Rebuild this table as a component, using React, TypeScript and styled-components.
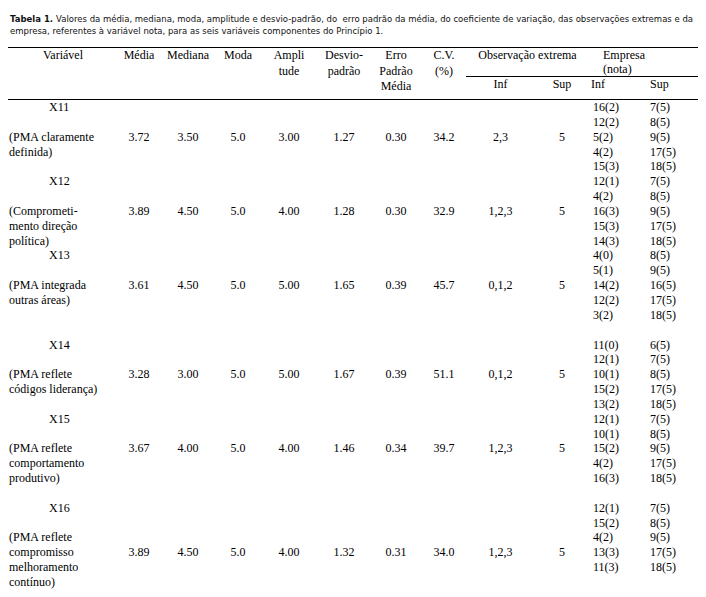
import React from "react";
import styled, { createGlobalStyle } from "styled-components";

const COLS = "110px 42px 56px 44px 58px 52px 52px 44px 69px 54px 56px 53px";
const LINE = 14.85;

type Group = {
  name: string;
  label: string[];
  valueRow: number;
  values: string[];
  inf: string[];
  sup: string[];
  rows: number;
};

const SUP = ["7(5)", "8(5)", "9(5)", "17(5)", "18(5)"];

const groups: Group[] = [
  {
    name: "X11",
    label: ["(PMA claramente", "definida)"],
    valueRow: 3,
    values: ["3.72", "3.50", "5.0", "3.00", "1.27", "0.30", "34.2", "2,3", "5"],
    inf: ["16(2)", "12(2)", "5(2)", "4(2)", "15(3)"],
    sup: SUP,
    rows: 5,
  },
  {
    name: "X12",
    label: ["(Comprometi-", "mento direção", "política)"],
    valueRow: 3,
    values: ["3.89", "4.50", "5.0", "4.00", "1.28", "0.30", "32.9", "1,2,3", "5"],
    inf: ["12(1)", "4(2)", "16(3)", "15(3)", "14(3)"],
    sup: SUP,
    rows: 5,
  },
  {
    name: "X13",
    label: ["(PMA integrada", "outras áreas)"],
    valueRow: 3,
    values: ["3.61", "4.50", "5.0", "5.00", "1.65", "0.39", "45.7", "0,1,2", "5"],
    inf: ["4(0)", "5(1)", "14(2)", "12(2)", "3(2)"],
    sup: ["8(5)", "9(5)", "16(5)", "17(5)", "18(5)"],
    rows: 6,
  },
  {
    name: "X14",
    label: ["(PMA reflete", "códigos liderança)"],
    valueRow: 3,
    values: ["3.28", "3.00", "5.0", "5.00", "1.67", "0.39", "51.1", "0,1,2", "5"],
    inf: ["11(0)", "12(1)", "10(1)", "15(2)", "13(2)"],
    sup: ["6(5)", "7(5)", "8(5)", "17(5)", "18(5)"],
    rows: 5,
  },
  {
    name: "X15",
    label: ["(PMA reflete", "comportamento", "produtivo)"],
    valueRow: 3,
    values: ["3.67", "4.00", "5.0", "4.00", "1.46", "0.34", "39.7", "1,2,3", "5"],
    inf: ["12(1)", "10(1)", "15(2)", "4(2)", "16(3)"],
    sup: SUP,
    rows: 6,
  },
  {
    name: "X16",
    label: ["(PMA reflete", "compromisso", "melhoramento", "contínuo)"],
    valueRow: 4,
    values: ["3.89", "4.50", "5.0", "4.00", "1.32", "0.31", "34.0", "1,2,3", "5"],
    inf: ["12(1)", "15(2)", "4(2)", "13(3)", "11(3)"],
    sup: SUP,
    rows: 6,
  },
];

const GlobalStyle = createGlobalStyle`
  body {
    margin: 0;
    background: #fff;
  }
`;

const Page = styled.div`
  width: 706px;
  height: 597px;
  overflow: hidden;
  box-sizing: border-box;
  padding: 13px 8px 0 8px;
  color: #000;
`;

const Caption = styled.div`
  margin: 0 0 10px 2px;
  font-family: "DejaVu Sans", Verdana, sans-serif;
  font-size: 8.5px;
  line-height: 12px;
  color: #111;
`;

const CaptionLine = styled.div`
  white-space: pre;
`;

const CaptionTitle = styled.b`
  margin-right: 3px;
  font-weight: bold;
`;

const Table = styled.div`
  width: 690px;
  border-top: 1px solid #000;
  font-family: "Liberation Serif", "Times New Roman", serif;
  font-size: 12px;
`;

const Head = styled.div`
  display: grid;
  grid-template-columns: ${COLS};
  grid-template-rows: 15px 14px 22px;
  border-bottom: 1px solid #000;
`;

const HeadCell = styled.div<{ $col: string; $row: string; $align?: string; $pad?: number; $rule?: boolean }>`
  grid-column: ${(p) => p.$col};
  grid-row: ${(p) => p.$row};
  text-align: ${(p) => p.$align ?? "center"};
  padding-left: ${(p) => p.$pad ?? 0}px;
  line-height: ${(p) => (p.$rule ? "14.3px" : "15.5px")};
  border-bottom: ${(p) => (p.$rule ? "1px solid #000" : "none")};
`;

const Body = styled.div`
  display: flex;
  flex-direction: column;
`;

const GroupGrid = styled.div<{ $rows: number }>`
  display: grid;
  grid-template-columns: ${COLS};
  grid-template-rows: repeat(${(p) => p.$rows}, ${LINE}px);
  line-height: ${LINE}px;
`;

const VarName = styled.div`
  grid-column: 1;
  grid-row: 1;
  padding-left: 41px;
`;

const LabelLine = styled.div<{ $row: number }>`
  grid-column: 1;
  grid-row: ${(p) => p.$row};
  padding-left: 1px;
  white-space: nowrap;
`;

const Value = styled.div<{ $row: number; $col: number }>`
  grid-column: ${(p) => p.$col};
  grid-row: ${(p) => p.$row};
  text-align: center;
`;

const Nota = styled.div<{ $row: number; $col: number; $pad: number }>`
  grid-column: ${(p) => p.$col};
  grid-row: ${(p) => p.$row};
  padding-left: ${(p) => p.$pad}px;
`;

const GroupRows = ({ g }: { g: Group }) => (
  <GroupGrid $rows={g.rows}>
    <VarName>{g.name}</VarName>
    {g.label.map((l, i) => (
      <LabelLine key={l} $row={3 + i}>
        {l}
      </LabelLine>
    ))}
    {g.values.map((v, i) => (
      <Value key={i} $row={g.valueRow} $col={2 + i}>
        {v}
      </Value>
    ))}
    {g.inf.map((v, i) => (
      <Nota key={"i" + i} $row={1 + i} $col={11} $pad={4}>
        {v}
      </Nota>
    ))}
    {g.sup.map((v, i) => (
      <Nota key={"s" + i} $row={1 + i} $col={12} $pad={5}>
        {v}
      </Nota>
    ))}
  </GroupGrid>
);

const App = () => {
  return (
    <Page>
      <GlobalStyle />
      <Caption>
        <CaptionLine>
          <CaptionTitle>Tabela 1.</CaptionTitle>
          {
            "Valores da média, mediana, moda, amplitude e desvio-padrão, do  erro padrão da média, do coeficiente de variação, das observações extremas e da"
          }
        </CaptionLine>
        <CaptionLine>
          empresa, referentes à variável nota, para as seis variáveis componentes do Princípio 1.
        </CaptionLine>
      </Caption>
      <Table>
        <Head>
          <HeadCell $col="1" $row="1 / 4">Variável</HeadCell>
          <HeadCell $col="2" $row="1 / 4">Média</HeadCell>
          <HeadCell $col="3" $row="1 / 4">Mediana</HeadCell>
          <HeadCell $col="4" $row="1 / 4">Moda</HeadCell>
          <HeadCell $col="5" $row="1 / 4">
            Ampli
            <br />
            tude
          </HeadCell>
          <HeadCell $col="6" $row="1 / 4">
            Desvio-
            <br />
            padrão
          </HeadCell>
          <HeadCell $col="7" $row="1 / 4">
            Erro
            <br />
            Padrão
            <br />
            Média
          </HeadCell>
          <HeadCell $col="8" $row="1 / 4">
            C.V.
            <br />
            (%)
          </HeadCell>
          <HeadCell $col="9 / 11" $row="1 / 3" $rule>
            Observação extrema
          </HeadCell>
          <HeadCell $col="11 / 13" $row="1 / 3" $align="left" $pad={14} $rule>
            Empresa
            <br />
            (nota)
          </HeadCell>
          <HeadCell $col="9" $row="3">Inf</HeadCell>
          <HeadCell $col="10" $row="3">Sup</HeadCell>
          <HeadCell $col="11" $row="3" $align="left" $pad={2}>
            Inf
          </HeadCell>
          <HeadCell $col="12" $row="3" $align="left" $pad={5}>
            Sup
          </HeadCell>
        </Head>
        <Body>
          {groups.map((g) => (
            <GroupRows key={g.name} g={g} />
          ))}
        </Body>
      </Table>
    </Page>
  );
};

export default App;
